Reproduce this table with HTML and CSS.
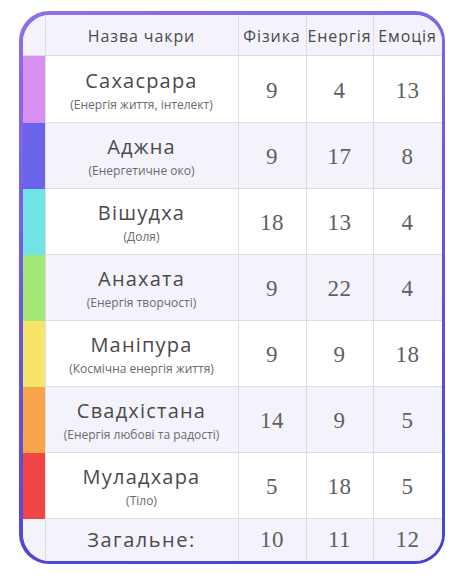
FILE: index.html
```html
<!DOCTYPE html>
<html lang="uk">
<head>
<meta charset="utf-8">
<link rel="stylesheet" href="styles.css">
</head>
<body>
<div class="frame">
  <div class="table">
    <div class="cell strip head"></div>
    <div class="cell head name-h">Назва чакри</div>
    <div class="cell head">Фізика</div>
    <div class="cell head">Енергія</div>
    <div class="cell head last">Емоція</div>

    <div class="cell strip c1"></div>
    <div class="cell name"><span class="title">Сахасрара</span><span class="sub">(Енергія життя, інтелект)</span></div>
    <div class="cell num">9</div><div class="cell num">4</div><div class="cell num last">13</div>

    <div class="cell strip c2"></div>
    <div class="cell name alt"><span class="title">Аджна</span><span class="sub">(Енергетичне око)</span></div>
    <div class="cell num alt">9</div><div class="cell num alt">17</div><div class="cell num alt last">8</div>

    <div class="cell strip c3"></div>
    <div class="cell name"><span class="title">Вішудха</span><span class="sub">(Доля)</span></div>
    <div class="cell num">18</div><div class="cell num">13</div><div class="cell num last">4</div>

    <div class="cell strip c4"></div>
    <div class="cell name alt"><span class="title">Анахата</span><span class="sub">(Енергія творчості)</span></div>
    <div class="cell num alt">9</div><div class="cell num alt">22</div><div class="cell num alt last">4</div>

    <div class="cell strip c5"></div>
    <div class="cell name"><span class="title">Маніпура</span><span class="sub">(Космічна енергія життя)</span></div>
    <div class="cell num">9</div><div class="cell num">9</div><div class="cell num last">18</div>

    <div class="cell strip c6"></div>
    <div class="cell name alt"><span class="title">Свадхістана</span><span class="sub">(Енергія любові та радості)</span></div>
    <div class="cell num alt">14</div><div class="cell num alt">9</div><div class="cell num alt last">5</div>

    <div class="cell strip c7"></div>
    <div class="cell name"><span class="title">Муладхара</span><span class="sub">(Тіло)</span></div>
    <div class="cell num">5</div><div class="cell num">18</div><div class="cell num last">5</div>

    <div class="cell strip tot"></div>
    <div class="cell total-l bottom">Загальне:</div>
    <div class="cell num total bottom">10</div><div class="cell num total bottom">11</div><div class="cell num total bottom last">12</div>
  </div>
</div>
</body>
</html>
```

FILE: styles.css
```css
html, body {
  margin: 0;
  padding: 0;
  background: #ffffff;
}
body {
  padding: 11px 0 0 19px;
  font-family: "Open Sans", "Noto Sans", sans-serif;
  color: #444;
}
.frame {
  width: 426px;
  height: 553px;
  box-sizing: border-box;
  padding: 3.5px;
  border-radius: 30px;
  background: linear-gradient(165deg, #8f70e6 0%, #6a58e0 45%, #4642cc 100%);
}
.table {
  width: 100%;
  height: 100%;
  border-radius: 27px;
  overflow: hidden;
  background: #fff;
  display: grid;
  grid-template-columns: 23px 193px 68px 67px 1fr;
  grid-template-rows: 41px 67px 66px 66px 66px 66px 66px 66px 1fr;
}
.cell {
  box-sizing: border-box;
  border-right: 1.5px solid #dedde6;
  border-bottom: 1.5px solid #dedde6;
  display: flex;
  align-items: center;
  justify-content: center;
}
.cell.last { border-right: none; }
.cell.bottom { border-bottom: none; }
.head {
  background: #f4f3fc;
  font-size: 16px;
  letter-spacing: 0.9px;
  color: #4a4a4a;
  padding-top: 2px;
}
.strip { border-bottom: none; }
.strip.head { border-bottom: 1.5px solid #dedde6; }
.c1 { background: #d98ef2; }
.c2 { background: #6b63ea; }
.c3 { background: #72e4e4; }
.c4 { background: #a4e876; }
.c5 { background: #f5e66a; }
.c6 { background: #f8a44c; }
.c7 { background: #f04545; }
.tot { background: #f4f3fc; }
.alt { background: #f4f3fc; }
.name {
  flex-direction: column;
  gap: 3px;
  padding-top: 3px;
}
.title {
  font-size: 20px;
  letter-spacing: 1.2px;
  color: #4a4a4a;
  line-height: 26px;
}
.sub {
  font-size: 12px;
  color: #6a6a6a;
  line-height: 16px;
}
.num {
  font-family: "Liberation Serif", serif;
  font-size: 23px;
  letter-spacing: 0.5px;
  color: #606060;
  padding-top: 4px;
}
.total { background: #f4f3fc; padding-top: 0; }
.total-l {
  background: #f4f3fc;
  font-size: 20px;
  letter-spacing: 1.5px;
  color: #4a4a4a;
}
```
